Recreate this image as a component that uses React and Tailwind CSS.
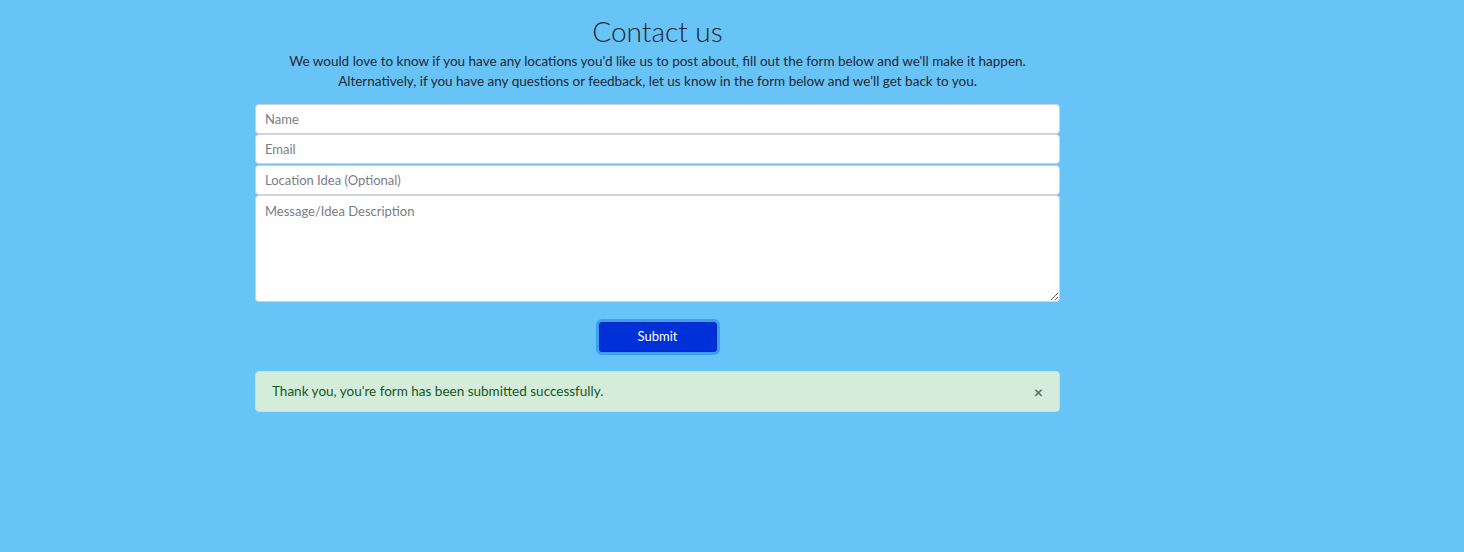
export default function App() {
  const font = { fontFamily: 'Lato, "Noto Sans", sans-serif' };
  return (
    <div className="min-h-[552px] w-full bg-[#68c3f7] text-[#212529]" style={font}>
      <div className="ml-[255px] w-[805px] pt-[14px]">
        <h1 className="text-center text-[28px] font-light leading-[34px] text-[#1b2530]">Contact us</h1>
        <p className="mt-[3px] text-center text-[13.5px] leading-[20px] text-[#1e2833]">
          We would love to know if you have any locations you'd like us to post about, fill out the form below and we'll make it happen.
          <br />
          Alternatively, if you have any questions or feedback, let us know in the form below and we'll get back to you.
        </p>
        <form className="mt-[13px] flex flex-col" onSubmit={(e) => e.preventDefault()}>
          <input
            placeholder="Name"
            className="h-[30px] w-full rounded-[4px] border border-[#ced4da] bg-white px-[9px] text-[13px] placeholder:text-[#7d7d85] outline-none"
          />
          <input
            placeholder="Email"
            className="h-[30px] w-full rounded-[4px] border border-[#ced4da] bg-white px-[9px] text-[13px] placeholder:text-[#7d7d85] outline-none"
          />
          <input
            placeholder="Location Idea (Optional)"
            className="mt-px h-[30px] w-full rounded-[4px] border border-[#ced4da] bg-white px-[9px] text-[13px] placeholder:text-[#7d7d85] outline-none"
          />
          <textarea
            placeholder="Message/Idea Description"
            className="h-[107px] w-full rounded-[4px] border border-[#ced4da] bg-white px-[9px] py-[6px] text-[13px] leading-[18px] placeholder:text-[#7d7d85] outline-none"
          />
          <div className="mt-[20px] flex justify-center">
            <button
              type="submit"
              className="h-[30px] w-[118px] rounded-[3px] border border-[#0027b8] bg-[#0030d8] text-[13px] text-white shadow-[0_0_0_3px_#3aa0f6]"
            >
              Submit
            </button>
          </div>
        </form>
        <div className="mt-[19px] flex h-[41px] items-center justify-between rounded-[4px] border border-[#c3e6cb] bg-[#d4edda] pl-[16px] pr-[16px] text-[13.5px] text-[#155724]">
          <span>Thank you, you're form has been submitted successfully.</span>
          <span className="text-[16px] font-bold leading-none text-[#5f6e66]">×</span>
        </div>
      </div>
    </div>
  );
}
